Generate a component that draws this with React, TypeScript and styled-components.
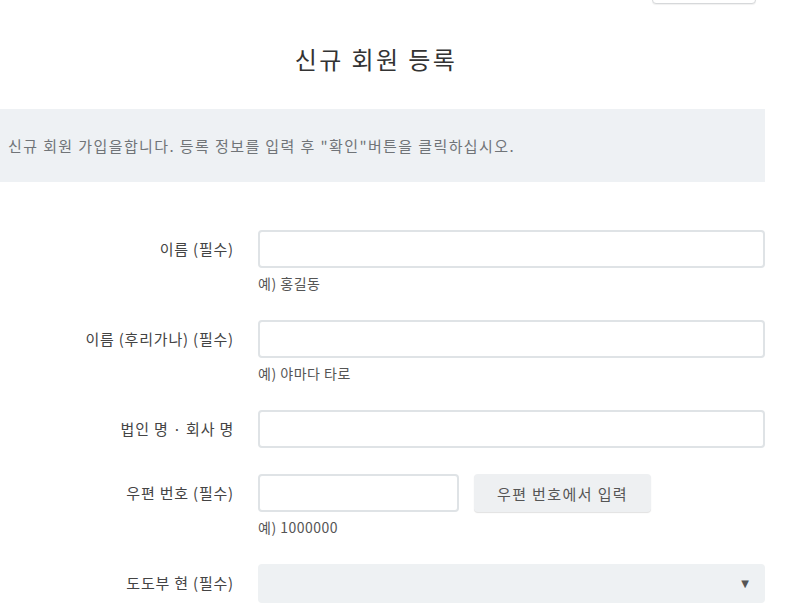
import React from 'react';
import styled, { createGlobalStyle } from 'styled-components';

const GlobalStyle = createGlobalStyle`
  html, body {
    margin: 0;
    padding: 0;
    background: #ffffff;
  }
  body {
    font-family: "Noto Sans CJK KR", "Noto Sans", sans-serif;
    color: #333;
    overflow: hidden;
  }
`;

type Field = {
  label: string;
  hint?: string;
  kind: 'text' | 'zip' | 'select';
};

const fields: Field[] = [
  { label: '이름 (필수)', hint: '예) 홍길동', kind: 'text' },
  { label: '이름 (후리가나) (필수)', hint: '예) 야마다 타로', kind: 'text' },
  { label: '법인 명 · 회사 명', kind: 'text' },
  { label: '우편 번호 (필수)', hint: '예) 1000000', kind: 'zip' },
  { label: '도도부 현 (필수)', kind: 'select' },
];

const App: React.FC = () => {
  return (
    <>
      <GlobalStyle />
      <Page>
        <TopBar>
          <TopButton type="button" />
        </TopBar>
        <Title>신규 회원 등록</Title>
        <Notice>신규 회원 가입을합니다. 등록 정보를 입력 후 "확인"버튼을 클릭하십시오.</Notice>
        <Form>
          {fields.map((f) => (
            <Row key={f.label}>
              <Label>{f.label}</Label>
              <Control>
                {f.kind === 'text' && <Input type="text" />}
                {f.kind === 'zip' && (
                  <ZipLine>
                    <Input type="text" $width={201} />
                    <ZipButton type="button">우편 번호에서 입력</ZipButton>
                  </ZipLine>
                )}
                {f.kind === 'select' && (
                  <Select>
                    <Arrow>▼</Arrow>
                  </Select>
                )}
                {f.hint && <Hint>{f.hint}</Hint>}
              </Control>
            </Row>
          ))}
        </Form>
      </Page>
    </>
  );
};

const Page = styled.div`
  width: 765px;
  height: 604px;
`;

const TopBar = styled.div`
  display: flex;
  justify-content: flex-end;
  padding-right: 9px;
  height: 4px;
  overflow: visible;
`;

const TopButton = styled.button`
  width: 104px;
  height: 34px;
  margin-top: -30px;
  border: 1px solid #d6d8da;
  border-radius: 4px;
  background: #fff;
  box-shadow: 0 1px 1px rgba(0, 0, 0, 0.06);
`;

const Title = styled.h1`
  width: 752px;
  margin: 0;
  padding-top: 38px;
  height: 67px;
  text-align: center;
  font-size: 24px;
  font-weight: 400;
  line-height: 34px;
  letter-spacing: 2.4px;
  color: #333;
`;

const Notice = styled.div`
  height: 73px;
  box-sizing: border-box;
  padding-left: 8px;
  display: flex;
  align-items: center;
  background: #eef1f4;
  font-size: 15px;
  letter-spacing: 1.4px;
  color: #707478;
`;

const Form = styled.div`
  padding-top: 48px;
`;

const Row = styled.div`
  display: flex;
  align-items: flex-start;
  margin-bottom: 26px;
`;

const Label = styled.div`
  width: 234px;
  padding-right: 24px;
  box-sizing: content-box;
  flex-shrink: 0;
  text-align: right;
  font-size: 15px;
  line-height: 38px;
  letter-spacing: 0.8px;
  color: #444;
`;

const Control = styled.div`
  flex: 1;
  display: flex;
  flex-direction: column;
`;

const Input = styled.input<{ $width?: number }>`
  width: ${(p) => (p.$width ? `${p.$width}px` : '100%')};
  height: 38px;
  box-sizing: border-box;
  border: 2px solid #dfe3e6;
  border-radius: 4px;
  background: #fff;
  outline: none;
`;

const ZipLine = styled.div`
  display: flex;
  gap: 15px;
`;

const ZipButton = styled.button`
  width: 177px;
  height: 38px;
  border: none;
  border-radius: 4px;
  background: #eef0f2;
  box-shadow: 0 1px 1px rgba(0, 0, 0, 0.12);
  font-family: inherit;
  font-size: 15px;
  letter-spacing: 1.4px;
  color: #555;
`;

const Select = styled.div`
  height: 39px;
  border-radius: 4px;
  background: #eef1f3;
  display: flex;
  align-items: center;
  justify-content: flex-end;
  padding-right: 16px;
`;

const Arrow = styled.span`
  font-size: 10px;
  color: #555;
  font-family: "DejaVu Sans", sans-serif;
`;

const Hint = styled.div`
  margin-top: 4px;
  font-size: 14px;
  line-height: 22px;
  letter-spacing: 0.5px;
  color: #555;
`;

export default App;
